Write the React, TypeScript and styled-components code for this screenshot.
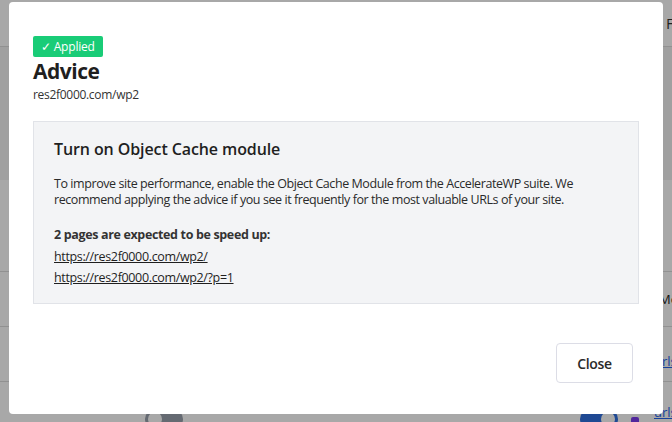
import styled, { createGlobalStyle } from 'styled-components'

const GlobalStyle = createGlobalStyle`
  html, body {
    margin: 0;
    padding: 0;
    width: 672px;
    height: 422px;
    overflow: hidden;
    font-family: "Open Sans", "Noto Sans", sans-serif;
    color: #222;
  }
`

const Page = styled.div`
  position: relative;
  width: 672px;
  height: 422px;
  overflow: hidden;
  background: #fff;
`

const Table = styled.div`
  display: flex;
  flex-direction: column;
`

const Row = styled.div<{ $h: number; $shade?: boolean; $line?: boolean }>`
  height: ${p => p.$h}px;
  box-sizing: border-box;
  display: grid;
  grid-template-columns: 145px 38px 397px 38px 36px 18px;
  align-items: center;
  background: ${p => (p.$shade ? '#f3f3f3' : '#fff')};
  border-bottom: ${p => (p.$line ? '1px solid #ddd' : 'none')};
  font-size: 13px;
`

const Cell = styled.div<{ $pad?: number; $down?: number }>`
  white-space: nowrap;
  overflow: visible;
  padding-left: ${p => p.$pad ?? 0}px;
  margin-top: ${p => p.$down ?? 0}px;
`

const HeadText = styled.span`
  font-size: 15px;
  color: #333;
`

const BgLink = styled.span`
  color: #2563eb;
  text-decoration: underline;
`

const Toggle = styled.div<{ $on?: boolean }>`
  width: 38px;
  height: 20px;
  border-radius: 10px;
  margin-top: 18px;
  background: ${p => (p.$on ? '#2f6fe0' : '#9aa1ad')};
  position: relative;
  &::after {
    content: '';
    position: absolute;
    top: 3px;
    left: ${p => (p.$on ? '21px' : '3px')};
    width: 14px;
    height: 14px;
    border-radius: 50%;
    background: #fff;
  }
`

const Dot = styled.div`
  width: 8px;
  height: 8px;
  margin: 22px 0 0 13px;
  border-radius: 2px;
  background: #7c3aed;
`

const Backdrop = styled.div`
  position: absolute;
  inset: 0;
  background: rgba(0, 0, 0, 0.34);
`

const Modal = styled.div`
  position: absolute;
  left: 9px;
  top: 2px;
  width: 654px;
  height: 412px;
  box-sizing: border-box;
  background: #fff;
  border-radius: 4px;
  padding: 34px 24px 0 24px;
  display: flex;
  flex-direction: column;
`

const Badge = styled.span`
  align-self: flex-start;
  background: #19cc77;
  color: #fff;
  font-size: 12px;
  line-height: 21px;
  height: 21px;
  padding: 0 8px 0 8px;
  border-radius: 2px;
  letter-spacing: -0.2px;
`

const Title = styled.h1`
  margin: 0;
  font-size: 21px;
  font-weight: 700;
  line-height: 28px;
  letter-spacing: -0.5px;
  color: #1f1f1f;
`

const Sub = styled.div`
  margin-top: 2px;
  font-size: 12px;
  line-height: 16px;
  letter-spacing: -0.3px;
  color: #333;
`

const Box = styled.div`
  margin-top: 18px;
  height: 183px;
  box-sizing: border-box;
  background: #f3f4f6;
  border: 1px solid #e1e3e8;
  padding: 16px 20px 0 20px;
`

const BoxTitle = styled.h2`
  margin: 0;
  font-size: 16px;
  font-weight: 600;
  line-height: 22px;
  letter-spacing: -0.1px;
  color: #1f1f1f;
`

const Text = styled.p`
  margin: 16px 0 0 0;
  font-size: 12.5px;
  line-height: 16px;
  letter-spacing: -0.43px;
  color: #2a2a2a;
`

const Strong = styled.div`
  margin-top: 18px;
  font-size: 12.5px;
  font-weight: 700;
  line-height: 18px;
  letter-spacing: -0.35px;
  color: #333;
`

const UrlList = styled.div`
  display: flex;
  flex-direction: column;
  gap: 3px;
  margin-top: 4px;
`

const Url = styled.a`
  font-size: 12.5px;
  line-height: 18px;
  letter-spacing: -0.35px;
  color: #1f1f1f;
  text-decoration: underline;
  align-self: flex-start;
`

const Footer = styled.div`
  display: flex;
  justify-content: flex-end;
  margin-top: 39px;
  padding-right: 6px;
`

const CloseButton = styled.button`
  width: 77px;
  height: 40px;
  background: #fff;
  border: 1px solid #dcdde6;
  border-radius: 4px;
  font-family: inherit;
  font-size: 14px;
  font-weight: 600;
  color: #2a2a2a;
  letter-spacing: -0.3px;
`

const urls = ['https://res2f0000.com/wp2/', 'https://res2f0000.com/wp2/?p=1']

const App = () => {
  return (
    <Page>
      <GlobalStyle />
      <Table>
        <Row $h={47} $line>
          <Cell />
          <Cell />
          <Cell />
          <Cell />
          <Cell />
          <Cell $pad={12}>
            <HeadText>F</HeadText>
          </Cell>
        </Row>
        <Row $h={133} $shade />
        <Row $h={92} $line />
        <Row $h={55} $line>
          <Cell />
          <Cell />
          <Cell />
          <Cell />
          <Cell />
          <Cell $pad={5}>Mo</Cell>
        </Row>
        <Row $h={55} $line>
          <Cell />
          <Cell />
          <Cell />
          <Cell />
          <Cell />
          <Cell $down={14}>
            <BgLink>urls</BgLink>
          </Cell>
        </Row>
        <Row $h={55}>
          <Cell />
          <Toggle />
          <Cell />
          <Toggle $on />
          <Dot />
          <Cell $down={4}>
            <BgLink>urls</BgLink>
          </Cell>
        </Row>
      </Table>
      <Backdrop />
      <Modal>
        <Badge>✓ Applied</Badge>
        <Title>Advice</Title>
        <Sub>res2f0000.com/wp2</Sub>
        <Box>
          <BoxTitle>Turn on Object Cache module</BoxTitle>
          <Text>
            To improve site performance, enable the Object Cache Module from the AccelerateWP suite. We
            recommend applying the advice if you see it frequently for the most valuable URLs of your site.
          </Text>
          <Strong>2 pages are expected to be speed up:</Strong>
          <UrlList>
            {urls.map(u => (
              <Url key={u} href="#">
                {u}
              </Url>
            ))}
          </UrlList>
        </Box>
        <Footer>
          <CloseButton>Close</CloseButton>
        </Footer>
      </Modal>
    </Page>
  )
}

export default App
